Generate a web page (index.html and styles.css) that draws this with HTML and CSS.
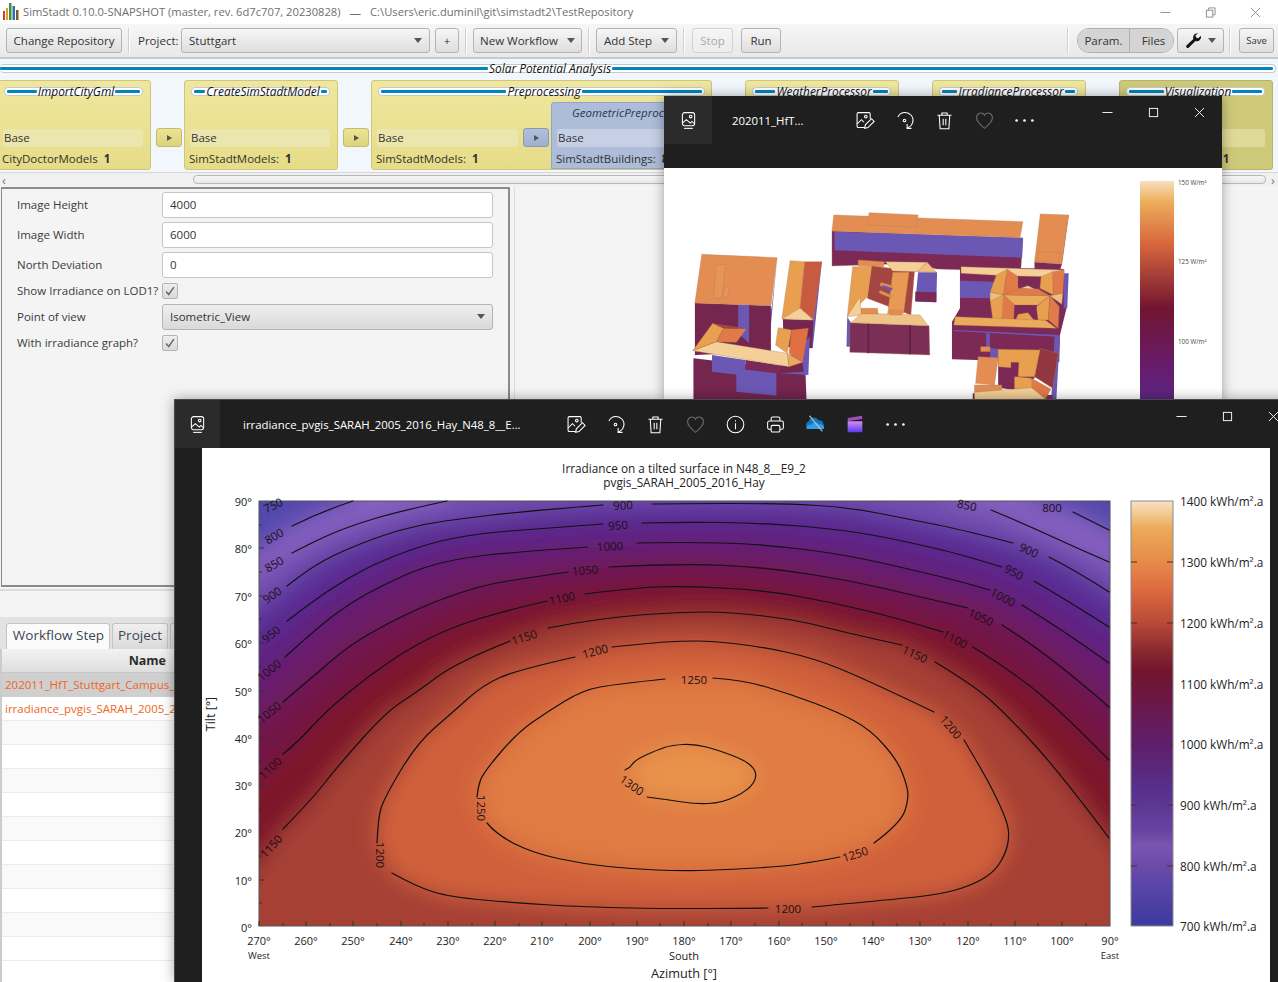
FILE: index.html
```html
<!DOCTYPE html>
<html lang="en">
<head>
<meta charset="utf-8">
<title>SimStadt</title>
<link rel="stylesheet" href="styles.css">
</head>
<body>
<svg class="defs" aria-hidden="true">
  <defs>
    <linearGradient id="clapGrad" x1="0" y1="0" x2="0" y2="1"><stop offset="0" stop-color="#d58cf0"/><stop offset="1" stop-color="#5a3cf0"/></linearGradient>
    <linearGradient id="cbar" x1="0" y1="0" x2="0" y2="1">
      <stop offset="0" stop-color="#f8e2c4"/><stop offset="0.065" stop-color="#ecaa58"/><stop offset="0.145" stop-color="#e68a4a"/><stop offset="0.21" stop-color="#dc6a3e"/><stop offset="0.287" stop-color="#b84a38"/><stop offset="0.35" stop-color="#8a2a30"/><stop offset="0.402" stop-color="#70142e"/><stop offset="0.43" stop-color="#6f1538"/><stop offset="0.575" stop-color="#5f1f6c"/><stop offset="0.68" stop-color="#57308c"/><stop offset="0.775" stop-color="#6a42a0"/><stop offset="0.81" stop-color="#7a55b0"/><stop offset="0.86" stop-color="#6a4ba8"/><stop offset="1" stop-color="#3a3a9f"/>
    </linearGradient>
    <linearGradient id="cbarSmall" x1="0" y1="0" x2="0" y2="1">
      <stop offset="0" stop-color="#f7dfbf"/><stop offset="0.09" stop-color="#edae5c"/><stop offset="0.27" stop-color="#d9693e"/><stop offset="0.56" stop-color="#721530"/><stop offset="0.82" stop-color="#661c6c"/><stop offset="1" stop-color="#5a2a88"/>
    </linearGradient>
    <filter id="soft" filterUnits="userSpaceOnUse" x="200" y="440" width="1080" height="560"><feGaussianBlur stdDeviation="11"/></filter>
    <clipPath id="plotClip"><rect x="259" y="501" width="851" height="425"/></clipPath>
    <symbol id="i-gal" viewBox="0 0 24 24"><rect x="5" y="3" width="14" height="15" rx="2.500"/><path d="M5 15l4.500-4 4.500 4 2-2 3 3"/><circle cx="14.500" cy="7.500" r="1.500"/><path d="M7 21h10"/></symbol>
    <symbol id="i-edit" viewBox="0 0 24 24"><path d="M12 20H5a1.500 1.500 0 0 1-1.500-1.500v-14A1.500 1.500 0 0 1 5 3h12a1.500 1.500 0 0 1 1.500 1.500V10"/><path d="M3.500 16l5-5 3 3"/><circle cx="13.500" cy="7.500" r="1.500"/><path d="M12 21l1-4 7-7 3 3-7 7z"/></symbol>
    <symbol id="i-rot" viewBox="0 0 24 24"><path d="M4.500 8A9 9 0 1 1 15 20.500"/><path d="M15 16v5h5"/><circle cx="12" cy="12" r="1.500"/></symbol>
    <symbol id="i-trash" viewBox="0 0 24 24"><path d="M4 6h16M9 6V3.500h6V6M6 6l1 15.500h10L18 6M10.500 10v7.500M13.500 10v7.500"/></symbol>
    <symbol id="i-heart" viewBox="0 0 24 24"><path d="M12 21C4.500 15 2.500 11 3 8a4.800 4.800 0 0 1 9-2 4.800 4.800 0 0 1 9 2c.5 3-1.500 7-9 13z"/></symbol>
    <symbol id="i-info" viewBox="0 0 24 24"><circle cx="12" cy="12" r="9.500"/><path d="M12 10.500V17.500M12 7v1.500"/></symbol>
    <symbol id="i-print" viewBox="0 0 24 24"><path d="M7 8V5a1.500 1.500 0 0 1 1.500-1.500h7A1.500 1.500 0 0 1 17 5v3M7 17.500H5a2 2 0 0 1-2-2V10a2 2 0 0 1 2-2h14a2 2 0 0 1 2 2v5.500a2 2 0 0 1-2 2h-2"/><rect x="7" y="13" width="10" height="7.500" rx="1.500"/></symbol>
    <symbol id="i-cloud" viewBox="0 0 24 24"><path class="cloud-a" d="M6 17a4 4 0 0 1-1-7.800A6 6 0 0 1 16 8a4 4 0 0 1 5 4 3 3 0 0 1-1 5z"/><path class="cloud-b" d="M3 17.500c-1-3 2-5 4.500-4.500C9 10 15 10 16.500 12.500c3-.5 5.500 1 5.500 5z"/><path class="cloud-slash" d="M6 3l14 17"/></symbol>
    <symbol id="i-clap" viewBox="0 0 24 24"><path fill="url(#clapGrad)" d="M4 9h16v12H4z"/><path fill="#9b4fc0" d="M4 5.500 19.500 3l.5 3.500L4 9z"/></symbol>
    <symbol id="i-dots" viewBox="0 0 24 24"><circle class="dot" cx="3" cy="12" r="1.500"/><circle class="dot" cx="12" cy="12" r="1.500"/><circle class="dot" cx="21" cy="12" r="1.500"/></symbol>
    <symbol id="i-min" viewBox="0 0 12 12"><path d="M0.500 6h11"/></symbol>
    <symbol id="i-max" viewBox="0 0 12 12"><rect x="1.500" y="1.500" width="9" height="9"/></symbol>
    <symbol id="i-close" viewBox="0 0 12 12"><path d="M1 1l10 10M11 1 1 11"/></symbol>
    <symbol id="i-restore" viewBox="0 0 12 12"><rect x="1.500" y="3.500" width="7" height="7.500"/><path d="M4 3.500V1h7v7.500H8.500"/></symbol>
  </defs>
</svg>

<div class="app">
  <header class="titlebar">
    <svg class="logo" viewBox="0 0 18 20"><path fill="#c8402c" d="M1 9h2v9H1z"/><path fill="#e2a020" d="M4 6h2v12H4z"/><path fill="#3f8f3f" d="M7 1h2.500v17H7z"/><path fill="#2f6fb0" d="M10.500 4H13v14h-2.500z"/><path fill="#7a5a2a" d="M14 8h2.500v10H14z"/></svg>
    <span class="app-title">SimStadt 0.10.0-SNAPSHOT (master, rev. 6d7c707, 20230828)</span>
    <span class="app-dash">—</span>
    <span class="app-title">C:\Users\eric.duminil\git\simstadt2\TestRepository</span>
    <div class="sys-controls">
      <svg class="sys-icon"><use href="#i-min"/></svg>
      <svg class="sys-icon"><use href="#i-restore"/></svg>
      <svg class="sys-icon"><use href="#i-close"/></svg>
    </div>
  </header>

  <nav class="toolbar">
    <button class="btn btn-repo">Change Repository</button>
    <span class="sep"></span>
    <span class="tool-label">Project:</span>
    <div class="btn combo"><span>Stuttgart</span><i class="caret"></i></div>
    <button class="btn btn-plus">+</button>
    <span class="sep"></span>
    <button class="btn btn-menu btn-new">New Workflow<i class="caret"></i></button>
    <span class="sep"></span>
    <button class="btn btn-menu btn-add">Add Step<i class="caret"></i></button>
    <span class="sep"></span>
    <button class="btn btn-stop">Stop</button>
    <button class="btn btn-run">Run</button>
    <div class="tool-right">
      <span class="sep"></span>
      <div class="toggle">
        <span class="toggle-item toggle-a">Param.</span>
        <span class="toggle-item toggle-b">Files</span>
      </div>
      <button class="btn btn-wrench">
        <svg class="wrench" viewBox="0 0 20 20"><path d="M14.500 1.500a5 5 0 0 0-4.700 6.700L1.700 15.800a1.900 1.900 0 0 0 2.600 2.700l8-7.800A5 5 0 0 0 18.600 4.300l-3 3-2.600-.7-.7-2.600 3-2.400z"/></svg>
        <i class="caret"></i>
      </button>
      <span class="sep"></span>
      <button class="btn btn-save">Save</button>
    </div>
  </nav>

  <section class="workflow">
    <div class="rail rail-main"><span class="rail-line"></span><span class="rail-label">Solar Potential Analysis</span><span class="rail-line"></span></div>
    <div class="steps">
      <article class="card card-first">
        <div class="rail"><span class="rail-line"></span><span class="rail-label">ImportCityGml</span><span class="rail-line"></span></div>
        <div class="strip">Base</div>
        <div class="count">CityDoctorModels <b>1</b></div>
      </article>
      <span class="arrow"><i></i></span>
      <article class="card">
        <div class="rail"><span class="rail-line"></span><span class="rail-label">CreateSimStadtModel</span><span class="rail-line"></span></div>
        <div class="strip">Base</div>
        <div class="count">SimStadtModels: <b>1</b></div>
      </article>
      <span class="arrow"><i></i></span>
      <article class="card card-group">
        <div class="rail"><span class="rail-line"></span><span class="rail-label">Preprocessing</span><span class="rail-line"></span></div>
        <div class="group-body">
          <div class="group-left">
            <div class="strip">Base</div>
            <div class="count">SimStadtModels: <b>1</b></div>
          </div>
          <span class="arrow arrow-blue"><i></i></span>
          <div class="inner">
            <div class="inner-title">GeometricPreprocessor</div>
            <div class="strip strip-blue">Base</div>
            <div class="count">SimStadtBuildings: <b>8</b></div>
          </div>
        </div>
      </article>
      <span class="arrow"><i></i></span>
      <article class="card">
        <div class="rail"><span class="rail-line"></span><span class="rail-label">WeatherProcessor</span><span class="rail-line"></span></div>
        <div class="strip">Base</div>
        <div class="count">SimStadtBuildings: <b>8</b></div>
      </article>
      <span class="arrow"><i></i></span>
      <article class="card">
        <div class="rail"><span class="rail-line"></span><span class="rail-label">IrradianceProcessor</span><span class="rail-line"></span></div>
        <div class="strip">Base</div>
        <div class="count">SimStadtBuildings: <b>8</b></div>
      </article>
      <span class="arrow"><i></i></span>
      <article class="card card-active">
        <div class="rail"><span class="rail-line"></span><span class="rail-label">Visualization</span><span class="rail-line"></span></div>
        <div class="strip strip-active">Base</div>
        <div class="count">SimStadtBuildings: <b>1</b></div>
      </article>
    </div>
  </section>

  <div class="hscroll">
    <span class="hscroll-arrow">‹</span>
    <span class="hscroll-thumb"></span>
    <span class="hscroll-arrow">›</span>
  </div>

  <main class="main">
    <form class="params">
      <div class="row"><label class="row-label">Image Height</label><input class="field" value="4000" readonly></div>
      <div class="row"><label class="row-label">Image Width</label><input class="field" value="6000" readonly></div>
      <div class="row"><label class="row-label">North Deviation</label><input class="field" value="0" readonly></div>
      <div class="row row-check"><label class="row-label">Show Irradiance on LOD1?</label><span class="check"><svg viewBox="0 0 16 16"><path d="M3.500 8.500l3 3.500 6-8.500"/></svg></span></div>
      <div class="row"><label class="row-label">Point of view</label><div class="field field-select"><span>Isometric_View</span><i class="caret"></i></div></div>
      <div class="row row-check"><label class="row-label">With irradiance graph?</label><span class="check"><svg viewBox="0 0 16 16"><path d="M3.500 8.500l3 3.500 6-8.500"/></svg></span></div>
    </form>
    <div class="main-right"></div>
  </main>

  <section class="lower">
    <div class="lower-strip"></div>
    <div class="tabs">
      <span class="tab tab-on">Workflow Step</span>
      <span class="tab">Project</span>
      <span class="tab tab-hidden"></span>
    </div>
    <div class="table">
      <div class="thead"><span class="th">Name</span></div>
      <div class="tr tr-sel"><span>202011_HfT_Stuttgart_Campus_LoD2.png</span></div>
      <div class="tr"><span>irradiance_pvgis_SARAH_2005_2016_Hay_N48_8__E9_2.png</span></div>
      <div class="tr tr-alt"></div><div class="tr"></div><div class="tr tr-alt"></div><div class="tr"></div><div class="tr tr-alt"></div><div class="tr"></div><div class="tr tr-alt"></div><div class="tr"></div><div class="tr tr-alt"></div><div class="tr"></div>
    </div>
  </section>
</div>

<!-- Photos window: campus view -->
<section class="photo photo-small">
  <header class="photo-head">
    <span class="photo-app"><svg class="ico"><use href="#i-gal"/></svg></span>
    <span class="photo-title title-small">202011_HfT...</span>
    <div class="tools">
      <span class="tool"><svg class="ico"><use href="#i-edit"/></svg></span>
      <span class="tool"><svg class="ico"><use href="#i-rot"/></svg></span>
      <span class="tool"><svg class="ico"><use href="#i-trash"/></svg></span>
      <span class="tool"><svg class="ico ico-dim"><use href="#i-heart"/></svg></span>
      <span class="tool"><svg class="ico"><use href="#i-dots"/></svg></span>
    </div>
    <div class="win-controls">
      <span class="win-btn"><svg class="win-ico"><use href="#i-min"/></svg></span>
      <span class="win-btn"><svg class="win-ico"><use href="#i-max"/></svg></span>
      <span class="win-btn"><svg class="win-ico"><use href="#i-close"/></svg></span>
    </div>
  </header>
  <div class="small-pane">
    <svg class="campus" viewBox="0 0 558 240">
      <g transform="translate(-4,-3) scale(0.3636,0.3333)" stroke="#b07a50" stroke-width="1">
        <!-- long block -->
        <path fill="#7c2a55" d="M473 198 473 303 700 295 760 312 992 320 998 220z"/>
        <path fill="#6b58b5" stroke="none" d="M480 200 998 218 996 278 480 256z"/>
        <path fill="#e38d52" d="M478 150 998 170 990 218 473 198z"/>
        <path fill="#e38d52" d="M575 143 710 150 705 186 570 180z"/>
        <!-- right tower -->
        <path fill="#6b58b5" stroke="none" d="M1124 150 1105 300 1095 298 1110 150z"/>
        <path fill="#e38d52" d="M1046 147 1124 150 1105 298 1030 292z"/>
        <path fill="#e38d52" d="M1040 260 1100 263 1095 292 1036 290z"/>
        <path fill="#7c2a55" stroke="none" d="M1030 292 1105 298 1100 318 1030 312z"/>
        <!-- left tall block -->
        <path fill="#6b58b5" stroke="none" d="M322 278 300 540 290 500 308 422z"/>
        <path fill="#74264f" stroke="none" d="M96 414 305 422 305 560 96 570z"/>
        <path fill="#6b58b5" stroke="none" d="M215 420 245 420 245 535 215 505z"/>
        <path fill="#e38d52" d="M115 268 322 278 305 422 96 414z"/>
        <path fill="#e5955a" d="M155 300 180 298 170 400 147 398z"/>
        <path fill="#e5955a" d="M178 365 190 366 186 397 174 396z"/>
        <!-- narrow block -->
        <path fill="#6b58b5" stroke="none" d="M445 290 420 550 410 545 430 300z"/>
        <path fill="#74264f" stroke="none" d="M338 462 422 466 418 550 340 545z"/>
        <path fill="#e8a050" d="M358 287 398 290 385 430 335 462z"/>
        <path fill="#c85a40" d="M398 290 445 290 422 465 385 430z"/>
        <path fill="#f5cf98" d="M385 430 422 465 335 462z"/>
        <!-- front wing -->
        <path fill="#74264f" stroke="none" d="M92 580 330 610 400 620 403 705 92 705z"/>
        <path fill="#6b58b5" stroke="none" d="M143 570 235 585 235 632 143 620z"/>
        <path fill="#6b58b5" stroke="none" d="M210 610 320 625 320 692 210 680z"/>
        <path fill="#6b58b5" stroke="none" d="M330 600 412 515 408 630 330 625z"/>
        <path fill="#7c2a55" stroke="none" d="M235 585 355 605 330 625 235 612z"/>
        <path fill="#74264f" stroke="none" d="M330 605 392 592 395 620 330 625z"/>
        <path fill="#f5cf98" d="M90 557 155 530 350 565 355 605z"/>
        <path fill="#e8a050" d="M90 557 145 475 175 490 155 530z"/>
        <path fill="#e07a48" d="M175 490 237 492 210 532 155 530z"/>
        <path fill="#a34540" stroke="none" d="M145 475 237 490 175 490z"/>
        <path fill="#e8a050" d="M325 488 362 495 350 565 318 540z"/>
        <path fill="#e07040" d="M362 495 408 490 392 592 355 565z"/>
        <path fill="#ecab5b" d="M350 565 392 592 355 605z"/>
        <!-- centre block -->
        <path fill="#6b58b5" stroke="none" d="M710 322 762 322 760 412 702 410z"/>
        <path fill="#7c2a55" stroke="none" d="M702 380 760 382 760 412 702 408z"/>
        <path fill="#e38d52" d="M545 285 617 290 615 305 545 303z"/>
        <path fill="#a34540" d="M582 303 700 318 690 450 570 400z"/>
        <path fill="#e8a050" d="M530 305 582 305 570 395 515 455z"/>
        <path fill="#e89a55" d="M640 322 685 322 670 445 626 448z"/>
        <path fill="#f5cf98" d="M620 290 735 292 707 320 640 318z"/>
        <path fill="#f0bd80" d="M735 292 760 322 707 320z"/>
        <path fill="#e38d52" d="M608 352 640 362 636 372 604 362z"/>
        <path fill="#6b58b5" stroke="none" d="M612 360 640 370 636 378 612 368z"/>
        <path fill="#e38d52" d="M605 376 636 390 634 398 602 384z"/>
        <path fill="#6b58b5" stroke="none" d="M515 455 525 473 522 545 513 545z"/>
        <path fill="#7c2f55" d="M522 473 740 482 742 570 522 562z"/>
        <path fill="none" stroke="#5a2048" stroke-width="4" d="M573 475V565M688 480V568"/>
        <path fill="#f5cf98" d="M552 430 600 445 515 455 550 395z"/>
        <path fill="#f0c488" d="M525 473 555 445 715 450 738 482z"/>
        <path fill="#e38d52" d="M553 430 598 430 600 447 553 447z"/>
        <path fill="#e38d52" d="M633 436 665 436 665 450 633 450z"/>
        <!-- courtyard complex -->
        <path fill="#7c2a55" stroke="none" d="M825 305 1110 312 1118 430 1100 510 1098 592 803 583 803 470 825 430z"/>
        <path fill="#6b58b5" stroke="none" d="M825 347 920 350 920 400 825 398z"/>
        <path fill="#6b58b5" stroke="none" d="M1110 325 1124 325 1120 430 1110 430z"/>
        <path fill="#f5cf98" d="M828 305 1110 315 1080 335 960 333 828 325z"/>
        <path fill="#e8a050" d="M925 330 955 313 945 390 908 382z"/>
        <path fill="#e07a48" d="M955 313 985 335 985 372 945 390z"/>
        <path fill="#7c2a55" stroke="none" d="M985 335 1048 338 1046 368 985 368z"/>
        <path fill="#e8a050" d="M1080 320 1082 390 1045 370 1048 335z"/>
        <path fill="#e07a48" d="M1080 320 1112 315 1108 385 1082 390z"/>
        <path fill="#e07a48" d="M945 390 985 370 1040 372 1072 392z"/>
        <path fill="#f5cf98" d="M996 368 1012 362 1030 372 992 370z"/>
        <path fill="#ecab5b" d="M945 390 1072 392 1040 420 975 420z"/>
        <path fill="#e8a050" d="M908 405 945 390 975 420 972 462 915 462z"/>
        <path fill="#e07a48" d="M945 390 975 420 972 462 940 462z"/>
        <path fill="#e8a050" d="M1072 392 1035 425 1040 465 1068 465z"/>
        <path fill="#e07a48" d="M1072 392 1098 425 1095 490 1068 465z"/>
        <path fill="#f0bd80" d="M1072 392 1108 385 1105 418z"/>
        <path fill="#f0bd80" d="M908 382 945 390 908 408z"/>
        <path fill="#7c2a55" stroke="none" d="M975 420 1036 424 1034 442 975 440z"/>
        <path fill="#e8a050" d="M985 448 1012 443 1030 468 978 466z"/>
        <path fill="#ecab5b" d="M812 455 1060 466 1090 490 808 480z"/>
        <path fill="#6b58b5" stroke="none" d="M805 498 1095 515 1095 510 810 495z"/>
        <path fill="#6b58b5" stroke="none" d="M897 505 907 505 907 545 897 545z"/>
        <path fill="#6b58b5" stroke="none" d="M1100 510 1090 705 1076 705 1085 515z"/>
        <!-- south block -->
        <path fill="#7c2a55" stroke="none" d="M930 553 1045 555 1030 640 975 675 930 668z"/>
        <path fill="#6b58b5" stroke="none" d="M908 550 932 552 932 578 908 578z"/>
        <path fill="#e38d52" d="M882 545 908 545 908 560 882 560z"/>
        <path fill="#92363f" d="M1045 550 1095 565 1080 670 1030 635z"/>
        <path fill="#e8a050" d="M930 553 1045 555 1030 635 985 635 987 592 965 592 965 608 930 605z"/>
        <path fill="#e38d52" d="M875 575 930 578 920 660 868 655z"/>
        <path fill="#7c2a55" stroke="none" d="M860 685 1080 690 1080 705 860 705z"/>
        <path fill="#e38d52" d="M865 660 940 660 940 680 865 685z"/>
        <path fill="#e8a050" d="M975 635 1022 640 1022 670 975 672z"/>
        <path fill="#e07a48" d="M1022 640 1075 672 1060 702 1022 670z"/>
        <path fill="#f5cf98" d="M865 682 1022 668 1060 702 865 705z"/>
      </g>
      <rect x="476" y="13" width="34" height="227" fill="url(#cbarSmall)"/>
      <text class="tiny" x="514" y="17">150 W/m²</text>
      <text class="tiny" x="514" y="96">125 W/m²</text>
      <text class="tiny" x="514" y="176">100 W/m²</text>
    </svg>
  </div>
</section>

<!-- Photos window: irradiance chart -->
<section class="photo photo-large">
  <header class="photo-head head-large">
    <span class="photo-app app-large"><svg class="ico"><use href="#i-gal"/></svg></span>
    <span class="photo-title title-large">irradiance_pvgis_SARAH_2005_2016_Hay_N48_8__E...</span>
    <div class="tools">
      <span class="tool"><svg class="ico"><use href="#i-edit"/></svg></span>
      <span class="tool"><svg class="ico"><use href="#i-rot"/></svg></span>
      <span class="tool"><svg class="ico"><use href="#i-trash"/></svg></span>
      <span class="tool"><svg class="ico ico-dim"><use href="#i-heart"/></svg></span>
      <span class="tool"><svg class="ico"><use href="#i-info"/></svg></span>
      <span class="tool"><svg class="ico"><use href="#i-print"/></svg></span>
      <span class="tool"><svg class="ico ico-fill"><use href="#i-cloud"/></svg></span>
      <span class="tool"><svg class="ico ico-fill"><use href="#i-clap"/></svg></span>
      <span class="tool"><svg class="ico"><use href="#i-dots"/></svg></span>
    </div>
    <div class="win-controls">
      <span class="win-btn"><svg class="win-ico"><use href="#i-min"/></svg></span>
      <span class="win-btn"><svg class="win-ico"><use href="#i-max"/></svg></span>
      <span class="win-btn"><svg class="win-ico"><use href="#i-close"/></svg></span>
    </div>
  </header>
  <div class="large-pane">
    <svg class="chart" viewBox="202 448 1068 534">
      <g clip-path="url(#plotClip)">
        <g filter="url(#soft)">
          <rect x="200" y="440" width="1000" height="600" fill="#5248ac"/>
          <path fill="#8660c0" d="M230 570 292 526 320 512 353 501 353 460 1025 460 1030 501 1073 512 1109 530 1160 555 1160 1040 230 1040z"/>
          <path fill="#7350b0" d="M230 590 292 553 317 540 350 526 400 511 447 501 447 460 945 460 950 500 991 510 1027 525 1070 545 1109 562 1160 590 1160 1040 230 1040z"/>
          <path fill="#592f96" d="M230 630 287 586 310 568 340 552 383 535 423 524 467 518 517 512 603 505 680 503 780 503 847 507 913 520 963 530 1013 543 1049 557 1080 573 1109 592 1160 625 1160 1040 230 1040z"/>
          <path fill="#5f2484" d="M230 665 287 621 317 598 350 577 383 560 433 542 483 533 550 528 603 524 680 522 763 523 847 530 913 543 963 555 1002 567 1034 581 1070 602 1109 627 1160 660 1160 1040 230 1040z"/>
          <path fill="#6a1c68" d="M230 705 285 657 317 628 350 603 383 585 423 567 467 557 517 552 588 547 680 542 763 544 847 555 913 570 963 582 990 590 1022 605 1063 630 1109 663 1160 700 1160 1040 230 1040z"/>
          <path fill="#721646" d="M230 750 283 702 317 673 350 645 390 622 433 602 483 585 533 577 568 572 609 567 680 563 763 567 847 580 913 595 968 608 1002 625 1047 653 1109 707 1160 745 1160 1040 230 1040z"/>
          <path fill="#7e182c" d="M230 805 283 754 297 743 323 713 367 677 410 648 450 628 500 612 547 601 585 594 633 588 680 586 763 590 830 602 897 618 943 632 973 647 1013 672 1065 715 1109 760 1160 810 1160 1040 230 1040z"/>
          <path fill="#a63f36" d="M230 900 283 829 313 798 337 767 383 715 417 692 457 662 510 641 548 628 600 618 680 612 730 612 797 620 847 633 902 645 935 662 973 685 1007 715 1058 770 1109 838 1160 890 1160 1040 230 1040z"/>
          <path fill="#d0603a" d="M377 843 378 820 383 800 417 743 450 715 483 685 517 670 575 657 612 647 650 643 680 641 713 641 763 647 813 658 863 678 936 713 964 740 1008 817 1009 833 1006 850 996 870 977 883 947 893 909 898 812 907 768 908 680 909 583 907 517 903 450 897 417 887 392 873z"/>
          <path fill="#e07c42" d="M477 797 478 787 483 773 517 733 543 715 583 690 617 684 665 679 713 678 743 680 834 710 871 730 897 760 909 798 901 823 874 843 840 857 802 864 775 867 718 870 680 871 633 869 583 864 533 853 497 835 487 823z"/>
          <path fill="#e8924c" d="M625 770 635 760 657 750 672 745 695 744 718 750 749 762 758 775 749 790 722 803 695 804 670 800 647 797z"/>
        </g>
      </g>
      <rect class="plot-frame" x="259" y="501" width="851" height="425"/>
      <g class="contours">
        <path d="M292 526Q320 512 353 501"/>
        <path d="M1073 512L1109 530"/>
        <path d="M292 553Q317 540 333.500 533T375 518.500T447 501"/>
        <path d="M991 510Q1027 525 1048.500 535T1109 562"/>
        <path d="M287 586Q310 568 325 560T361.500 543.500T403 529.500T445 521T492 515T603 505"/>
        <path d="M652 504Q680 503.500 730 503.500T813.500 505.250T880 513.500T938 525T1013 543"/>
        <path d="M1049 557Q1080 573 1109 592"/>
        <path d="M287 621Q317 598 333.500 587.500T366.500 568.500T408 551T458 537.500T516.500 530.500T603 524"/>
        <path d="M642 523Q680 522 721.500 522.500T805 526.500T880 536.500T938 549T1002 567"/>
        <path d="M1034 581Q1070 602 1109 627"/>
        <path d="M285 657Q317 628 333.500 615.500T366.500 594T403 576T445 562T492 554.500T588 547"/>
        <path d="M637 543Q680 542 721.500 543T805 549.500T880 562.500T938 576T990 590"/>
        <path d="M1022 605Q1063 630 1109 663"/>
        <path d="M283 702Q317 673 333.500 659T370 633.500T411.500 612T458 593.500T508 581T568 572"/>
        <path d="M609 567Q680 563.500 721.500 565.250T805 573.500T880 587.500T968 608"/>
        <path d="M1002 625Q1047 653 1109 707"/>
        <path d="M283 754Q297 743 311 727.500T346 694.500T388.500 662.500T430 638T475 620T547 601"/>
        <path d="M585 594Q633 588 656.500 587T721.500 588T796.500 596T863.500 610T943 632"/>
        <path d="M973 647Q1013 672 1037.500 692T1109 760"/>
        <path d="M283 829Q313 798 325 782.500T361.500 739.500T401.500 702T437 677T510 641"/>
        <path d="M548 628Q600 618 640 615T705 612T763.500 616T822 626.500T902 645"/>
        <path d="M935 662Q973 685 988.500 698.500T1031 741T1109 838"/>
        <path d="M377 843Q378 820 380.500 810T400 771.500T435 727.500T468 698.500T500 677.500T575 657"/>
        <path d="M612 647Q650 643 665 642T696.500 641T738 644T788 652.500T838 668T934 712"/>
        <path d="M964 740Q985 775 992.500 790T1004 815T1008.500 831.500T1007.500 845T1001 861T986.500 876.500T962 888T928 895.500T812 907"/>
        <path d="M768 908Q680 909 631.500 908T550 905T483.500 900T433.500 892T392 873"/>
        <path d="M477 797Q478 787 480.500 780T500 753T532 722.500T565 701T600 687T665 679"/>
        <path d="M713 678Q743 680 766.500 687T814 703T854.500 721T884 745T901.500 771T907.500 790T905 810.500T874 843"/>
        <path d="M840 857Q802 864 788.500 865.500T746.500 868.500T699 870.500T656.500 870T608 866.500T558 858.500T515 844T487 823"/>
        <path d="M625 770Q630 768 632.500 764T646 755T664.500 747.500T683.500 744.500T706.500 747T733.500 756T753.500 768.500T753.500 782.500T735.500 796.500T708.500 803.500T682.500 802T647 797"/>
      </g>
      <g class="clabels">
        <text x="273" y="505" transform="rotate(-25 273 505)">750</text>
        <text x="274" y="536" transform="rotate(-30 274 536)">800</text>
        <text x="274" y="564" transform="rotate(-30 274 564)">850</text>
        <text x="272" y="595" transform="rotate(-35 272 595)">900</text>
        <text x="271" y="634" transform="rotate(-38 271 634)">950</text>
        <text x="269" y="670" transform="rotate(-40 269 670)">1000</text>
        <text x="269" y="712" transform="rotate(-40 269 712)">1050</text>
        <text x="270" y="768" transform="rotate(-43 270 768)">1100</text>
        <text x="271" y="846" transform="rotate(-48 271 846)">1150</text>
        <text x="623" y="505" transform="rotate(-3 623 505)">900</text>
        <text x="618" y="525" transform="rotate(-5 618 525)">950</text>
        <text x="610" y="546" transform="rotate(-3 610 546)">1000</text>
        <text x="585" y="570" transform="rotate(-4 585 570)">1050</text>
        <text x="562" y="598" transform="rotate(-12 562 598)">1100</text>
        <text x="524" y="637" transform="rotate(-18 524 637)">1150</text>
        <text x="595" y="651" transform="rotate(-15 595 651)">1200</text>
        <text x="694" y="679">1250</text>
        <text x="632" y="785" transform="rotate(35 632 785)">1300</text>
        <text x="967" y="505" transform="rotate(12 967 505)">850</text>
        <text x="1052" y="507">800</text>
        <text x="1029" y="550" transform="rotate(25 1029 550)">900</text>
        <text x="1014" y="572" transform="rotate(28 1014 572)">950</text>
        <text x="1003" y="597" transform="rotate(28 1003 597)">1000</text>
        <text x="981" y="617" transform="rotate(25 981 617)">1050</text>
        <text x="955" y="639" transform="rotate(27 955 639)">1100</text>
        <text x="915" y="654" transform="rotate(25 915 654)">1150</text>
        <text x="951" y="727" transform="rotate(50 951 727)">1200</text>
        <text x="855" y="854" transform="rotate(-18 855 854)">1250</text>
        <text x="788" y="908">1200</text>
        <text x="380" y="855" transform="rotate(90 380 855)">1200</text>
        <text x="481" y="808" transform="rotate(90 481 808)">1250</text>
      </g>
      <path class="ticks" d="M259 926v-5M283 926v-3M306 926v-5M330 926v-3M353 926v-5M377 926v-3M401 926v-5M424 926v-3M448 926v-5M472 926v-3M495 926v-5M519 926v-3M542 926v-5M566 926v-3M590 926v-5M613 926v-3M637 926v-5M660 926v-3M684 926v-5M708 926v-3M731 926v-5M755 926v-3M779 926v-5M802 926v-3M826 926v-5M850 926v-3M873 926v-5M897 926v-3M920 926v-5M944 926v-3M968 926v-5M991 926v-3M1015 926v-5M1038 926v-3M1062 926v-5M1086 926v-3M259 548h5M259 596h5M259 643h5M259 691h5M259 738h5M259 785h5M259 832h5M259 880h5M259 525h3M259 572h3M259 619h3M259 667h3M259 714h3M259 761h3M259 809h3M259 856h3M259 903h3"/>
      <g class="ylabels">
        <text x="252" y="501">90°</text><text x="252" y="548">80°</text><text x="252" y="596">70°</text><text x="252" y="643">60°</text><text x="252" y="691">50°</text><text x="252" y="738">40°</text><text x="252" y="785">30°</text><text x="252" y="832">20°</text><text x="252" y="880">10°</text><text x="252" y="927">0°</text>
      </g>
      <g class="xlabels">
        <text x="259" y="940">270°</text><text x="306" y="940">260°</text><text x="353" y="940">250°</text><text x="401" y="940">240°</text><text x="448" y="940">230°</text><text x="495" y="940">220°</text><text x="542" y="940">210°</text><text x="590" y="940">200°</text><text x="637" y="940">190°</text><text x="684" y="940">180°</text><text x="731" y="940">170°</text><text x="779" y="940">160°</text><text x="826" y="940">150°</text><text x="873" y="940">140°</text><text x="920" y="940">130°</text><text x="968" y="940">120°</text><text x="1015" y="940">110°</text><text x="1062" y="940">100°</text><text x="1110" y="940">90°</text>
        <text class="dir" x="259" y="955">West</text><text x="684" y="955">South</text><text class="dir" x="1110" y="955">East</text>
        <text class="axis" x="684" y="973">Azimuth [°]</text>
        <text class="chart-title" x="684" y="468">Irradiance on a tilted surface in N48_8__E9_2</text>
        <text class="chart-title" x="684" y="482">pvgis_SARAH_2005_2016_Hay</text>
        <text class="axis-y" x="210" y="714" transform="rotate(-90 210 714)">Tilt [°]</text>
      </g>
      <rect class="cbar" x="1131" y="501" width="42" height="425" fill="url(#cbar)"/>
      <path class="cbar-ticks" d="M1131 562h6M1167 562h6M1131 623h6M1167 623h6M1131 683h6M1167 683h6M1131 744h6M1167 744h6M1131 805h6M1167 805h6M1131 866h6M1167 866h6"/>
      <g class="blabels">
        <text x="1180" y="501">1400 kWh/m².a</text><text x="1180" y="562">1300 kWh/m².a</text><text x="1180" y="623">1200 kWh/m².a</text><text x="1180" y="684">1100 kWh/m².a</text><text x="1180" y="744">1000 kWh/m².a</text><text x="1180" y="805">900 kWh/m².a</text><text x="1180" y="866">800 kWh/m².a</text><text x="1180" y="926">700 kWh/m².a</text>
      </g>
    </svg>
  </div>
</section>
</body>
</html>
```
FILE: styles.css
```css
* { box-sizing: border-box; }
html, body { margin: 0; height: 100%; }
body {
  position: relative;
  width: 1278px;
  height: 982px;
  overflow: hidden;
  background: #f4f4f4;
  font-family: "Open Sans", "Noto Sans", sans-serif;
  font-size: 11.5px;
  color: #333;
}
.defs { position: absolute; width: 0; height: 0; }
.app { display: flex; flex-direction: column; height: 982px; }

/* title bar */
.titlebar { height: 24px; flex: none; background: #fff; display: flex; align-items: center; padding-left: 2px; color: #6f6f6f; }
.logo { width: 18px; height: 20px; margin-right: 3px; }
.app-title { font-size: 11.2px; line-height: 22px; white-space: nowrap; }
.app-dash { margin: 0 9px; }
.sys-controls { margin-left: auto; display: flex; gap: 34px; padding-right: 17px; }
.sys-icon { width: 11px; height: 11px; fill: none; stroke: #888; stroke-width: 1; }

/* toolbar */
.toolbar {
  height: 35px;
  flex: none;
  padding: 4px 4px 4px 6px;
  display: flex;
  align-items: center;
  background: linear-gradient(#f6f6f6, #e9e9e9);
  border-bottom: 2px solid #c9c9c9;
}
.btn {
  height: 25px;
  border: 1px solid #b4b4b4;
  border-radius: 3px;
  background: linear-gradient(#f6f6f6, #dedede);
  font: inherit;
  color: #333;
  padding: 0;
  display: flex;
  align-items: center;
  justify-content: center;
  flex: none;
}
.caret { display: inline-block; width: 0; height: 0; border: 4px solid transparent; border-top: 5px solid #555; border-bottom: 0; }
.sep { width: 2px; height: 26px; background: #cfcfcf; border-right: 1px solid #fff; flex: none; margin: 0 6px; }
.btn-repo { width: 116px; }
.tool-label { width: 45px; padding-left: 2px; flex: none; }
.combo { width: 249px; justify-content: space-between; padding: 0 7px; }
.btn-plus { width: 24px; margin-left: 5px; }
.btn-menu { gap: 9px; }
.btn-new { width: 109px; }
.btn-add { width: 81px; }
.btn-stop { width: 41px; color: #a8a8a8; border-color: #d2d2d2; background: linear-gradient(#f5f5f5, #ececec); margin-left: 1px; }
.btn-run { width: 40px; margin-left: 8px; }
.tool-right { margin-left: auto; display: flex; align-items: center; }
.toggle { display: flex; height: 25px; border: 1px solid #b0b0b0; border-radius: 12px; overflow: hidden; }
.toggle-item { display: flex; align-items: center; justify-content: center; background: #d4d4d4; }
.toggle-a { width: 52px; border-right: 1px solid #b0b0b0; }
.toggle-b { width: 43px; padding-left: 4px; }
.btn-wrench { width: 47px; margin-left: 3px; gap: 6px; }
.wrench { width: 17px; height: 17px; fill: #151515; }
.btn-save { width: 35px; font-size: 9.500px; }
.tool-right .sep:first-child { margin: 0 8px 0 0; }
.tool-right .sep:nth-child(4) { margin: 0 8px 0 5px; }

/* workflow */
.workflow { height: 113px; flex: none; background: #f1f7fc; padding-top: 5px; overflow: hidden; }
.rail {
  height: 9px;
  display: flex;
  align-items: center;
  gap: 1px;
  background: #fff;
  border: 1px solid #c3c9cc;
  border-radius: 4px;
  padding: 0 2px;
}
.rail-main { width: 1276px; margin-bottom: 7px; border-left: 0; padding-left: 0; }
.rail-main .rail-line:first-child { flex: none; width: 488px; }
.rail-line { flex: 1 1 0; height: 3px; background: #0085bb; border-radius: 1px; }
.card .rail-line:first-child { flex: 1 1 5px; }
.rail-label { font-style: italic; color: #111; font-size: 11.9px; line-height: 9px; white-space: nowrap; }
.steps { display: flex; align-items: flex-start; }
.card {
  width: 154px;
  height: 90px;
  flex: none;
  padding: 6px 7px 0 5px;
  display: flex;
  flex-direction: column;
  background: linear-gradient(#efe79f, #e6dc88);
  border: 1px solid #cfc67a;
  border-radius: 3px;
}
.card .rail { margin: 0 0 0 1px; flex: none; }
.card-first { margin-left: -3px; }
.card-group { width: 341px; padding-right: 6px; overflow: hidden; }
.card-active { background: #cfc97a; border-color: #b9b36a; }
.card-active .count { margin-left: -8px; }
.strip { height: 18px; margin-top: 33px; flex: none; padding-left: 1px; line-height: 18px; background: #ebe6ae; border-radius: 3px; color: #333; }
.strip-active { background: #dfd99a; }
.count { margin-top: 4px; height: 16px; line-height: 16px; white-space: nowrap; margin-left: -1px; }
.count b { color: #333; margin-left: 3px; }
.arrow {
  width: 26px;
  height: 19px;
  flex: none;
  margin: 48px 2px 0 5px;
  background: linear-gradient(#ece495, #ddd37c);
  border: 1px solid #c4bb6c;
  border-radius: 3px;
  display: flex;
  align-items: center;
  justify-content: center;
}
.arrow i { width: 0; height: 0; border: 3px solid transparent; border-left: 5px solid #555; border-right: 0; }
.group-body { display: flex; height: 74px; margin-top: 6px; margin-right: -6px; }
.group-left { width: 141px; flex: none; }
.group-left .strip { margin-top: 27px; }
.arrow-blue { background: linear-gradient(#b0bfda, #9fb0cf); border-color: #8899b8; margin: 26px 2px 0 5px; }
.inner { flex: 1; background: #adbcd8; border: 1px solid #93a4c4; border-radius: 3px 0 0 0; padding: 0 0 0 5px; overflow: hidden; white-space: nowrap; }
.inner-title { font-style: italic; height: 26px; line-height: 20px; padding-left: 15px; color: #2b3550; }
.strip-blue { margin-top: 0; background: #c5d0e4; }

/* horizontal scroll bar */
.hscroll { height: 14px; flex: none; display: flex; align-items: center; background: #f0f0f0; border-top: 1px solid #d8d8d8; color: #777; padding: 0 2px; }
.hscroll-arrow { width: 8px; flex: none; line-height: 12px; font-size: 13px; }
.hscroll-thumb { width: 1073px; flex: none; height: 9px; margin: 0 5px 0 183px; border: 1px solid #b8b8b8; border-radius: 4px; background: linear-gradient(#f6f6f6, #e8e8e8); }

/* parameters */
.main { height: 401px; display: flex; padding-top: 1px; flex: none; }
.params {
  width: 509px;
  margin-left: 1px;
  padding: 3px 16px 0 15px;
  border: 2px solid #8a8a8a;
  border-width: 2px 2px 2px 1px;
  background: #f4f4f4;
  display: flex;
  flex-direction: column;
  gap: 4px;
  flex: none;
}
.row { display: flex; align-items: center; height: 26px; flex: none; }
.row-check { height: 18px; }
.row-label { width: 145px; flex: none; white-space: nowrap; color: #3b3b3b; padding-bottom: 2px; }
.field {
  width: 331px;
  height: 26px;
  flex: none;
  border: 1px solid #c6c6c6;
  border-radius: 3px;
  background: #fff;
  font: inherit;
  color: #333;
  padding: 0 7px 2px;
}
.field-select { display: flex; align-items: center; justify-content: space-between; background: linear-gradient(#efefef, #d9d9d9); border-color: #b4b4b4; padding-right: 7px; }
.check { width: 16px; height: 16px; border: 1px solid #b4b4b4; border-radius: 2px; background: linear-gradient(#eee, #dadada); display: flex; }
.check svg { width: 14px; height: 14px; fill: none; stroke: #666; stroke-width: 1.6; }
.main-right { flex: 1; margin-left: 4px; border-left: 1px solid #ddd; background: #f4f4f4; }

/* lower tabs and table */
.lower { flex: 1; display: flex; flex-direction: column; min-height: 0; }
.lower-strip { height: 28px; border-top: 2px solid #dcdcdc; margin-top: 2px; flex: none; background: #f4f4f4; }
.tabs { height: 32px; background: #e2e2e2; display: flex; align-items: flex-end; gap: 2px; padding-left: 6px; flex: none; }
.tab { height: 26px; padding: 0 5px 3px; display: flex; align-items: center; font-size: 13.5px; color: #3c4652; border: 1px solid #c4c4c4; border-bottom: 0; border-radius: 3px 3px 0 0; background: linear-gradient(#f0f0f0, #dadada); }
.tab-on { background: #fbfbfb; width: 104px; justify-content: center; padding: 0 0 3px 1px; }
.tab-hidden { width: 40px; }
.table { flex: 1; border-left: 2px solid #ccc; background: #fff; overflow: hidden; }
.thead { height: 24px; display: flex; align-items: center; width: 172px; background: linear-gradient(#f2f2f2, #dedede); border-bottom: 1px solid #c8c8c8; }
.th { margin-left: auto; padding-right: 8px; font-weight: 700; font-size: 12.500px; color: #2c2c2c; }
.tr { height: 24px; display: flex; align-items: center; padding: 0 0 1px 3px; color: #f0651c; white-space: nowrap; border-bottom: 1px solid #ececec; }
.tr-sel { background: #cfcfcf; border-bottom: 0; }
.tr-alt { background: #f9f9f9; }

/* photo windows */
.photo { position: absolute; background: #1f1f1f; box-shadow: 0 0 12px rgba(0, 0, 0, .35); color: #fff; }
.photo-small { left: 664px; top: 96px; width: 558px; height: 306px; }
.photo-large { left: 174px; top: 399px; width: 1122px; height: 583px; border: 1px solid #4a4a4a; border-width: 1px 0 0 1px; }
.photo-head { height: 72px; display: flex; align-items: flex-start; }
.head-large { height: 48px; }
.photo-app { width: 48px; height: 48px; background: #2b2b2b; display: flex; align-items: center; justify-content: center; flex: none; }
.app-large { width: 45px; }
.photo-title { font-size: 11.4px; white-space: nowrap; line-height: 49px; flex: none; overflow: hidden; }
.title-small { width: 132px; padding-left: 20px; }
.title-large { width: 335px; padding-left: 23px; }
.tools { display: flex; flex: none; }
.tool { width: 40px; height: 48px; display: flex; align-items: center; justify-content: center; }
.ico { width: 21px; height: 21px; fill: none; stroke: #fff; stroke-width: 1.200; }
.ico-dim { stroke: #6b6b6b; }
.ico-fill { stroke: none; width: 22px; height: 22px; }
.dot { fill: #fff; stroke: none; }
.cloud-a { fill: #1273c4; stroke: none; }
.cloud-b { fill: #2ba2e6; stroke: none; }
.cloud-slash { fill: none; stroke: #b8b8b8; stroke-width: 1.300; }
.win-controls { margin-left: auto; display: flex; flex: none; }
.win-btn { width: 46px; height: 32px; display: flex; align-items: center; justify-content: center; }
.win-ico { width: 11px; height: 11px; fill: none; stroke: #fff; stroke-width: 1; }

.small-pane { height: 234px; background: #fff; }
.campus { display: block; width: 558px; height: 240px; }
.tiny { font-size: 6.300px; fill: #444; }

.large-pane { margin-left: 27px; width: 1068px; height: 534px; background: #fff; }
.chart { display: block; width: 1068px; height: 534px; font-size: 11px; overflow: visible; }
.plot-frame { fill: none; stroke: #555; stroke-width: 1; }
.contours path { fill: none; stroke: #111; stroke-width: 1.200; stroke-linejoin: round; stroke-linecap: round; }
.clabels text { fill: #1b0f14; text-anchor: middle; dominant-baseline: central; font-size: 11.500px; }
.ticks { fill: none; stroke: #333; stroke-width: 1; }
.ylabels text { fill: #222; text-anchor: end; dominant-baseline: central; }
.xlabels text { fill: #222; text-anchor: middle; dominant-baseline: central; }
.xlabels .chart-title { font-size: 11.8px; }
.xlabels .dir { font-size: 9.500px; }
.xlabels .axis { font-size: 12.700px; }
.xlabels .axis-y { font-size: 12.500px; }
.blabels text { fill: #222; dominant-baseline: central; font-size: 11.800px; }
.cbar { stroke: #8c8c8c; stroke-width: 1; }
.cbar-ticks { fill: none; stroke: #5a2a20; stroke-width: 1; }
```
